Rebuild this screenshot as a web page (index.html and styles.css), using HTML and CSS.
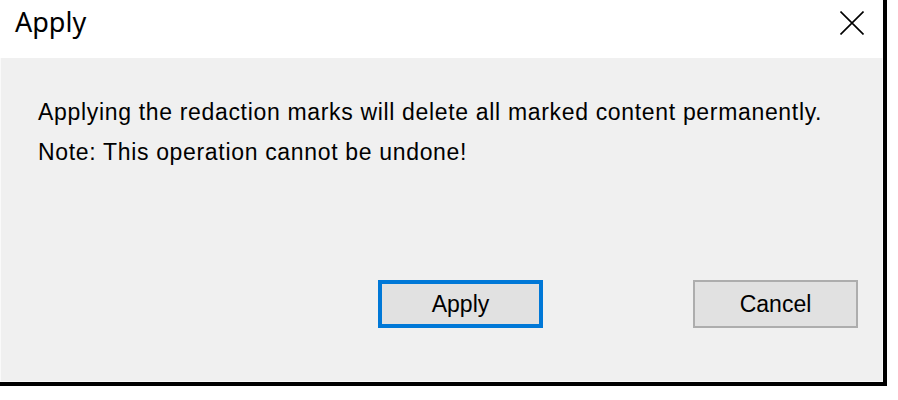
FILE: index.html
```html
<!DOCTYPE html>
<html lang="en">
<head>
  <meta charset="UTF-8">
  <title>Apply</title>
  <link rel="stylesheet" href="styles.css">
</head>
<body>
  <div class="dialog">
    <div class="titlebar">
      <div class="title">Apply</div>
      <button class="close" aria-label="Close">
        <svg width="24" height="24" viewBox="0 0 24 24">
          <path d="M0.5 0.5 L23.5 23.5 M23.5 0.5 L0.5 23.5" stroke="#000" stroke-width="1.6" fill="none"/>
        </svg>
      </button>
    </div>

    <div class="content">
      <div class="message">
        <p>Applying the redaction marks will delete all marked content permanently.</p>
        <p>Note: This operation cannot be undone!</p>
      </div>
      <div class="buttons">
        <button class="btn default">Apply</button>
        <button class="btn">Cancel</button>
      </div>
    </div>
  </div>
</body>
</html>
```

FILE: styles.css
```css
:root {
  --face: #f0f0f0;
  --btn: #e1e1e1;
  --btn-border: #adadad;
  --focus: #0078d7;
}

body {
  margin: 0;
  background: #fff;
  font-family: "Liberation Sans", Arial, sans-serif;
  color: #000;
}

.dialog {
  width: 883px;
  height: 382px;
  border-right: 4px solid #000;
  border-bottom: 4px solid #000;
  display: flex;
  flex-direction: column;
}

.titlebar {
  height: 58px;
  background: #fff;
  display: flex;
  align-items: flex-start;
  justify-content: space-between;
  padding: 8px 19px 0 15px;
  box-sizing: border-box;
}

.title {
  font-family: "Noto Sans", "Liberation Sans", sans-serif;
  font-size: 27px;
  line-height: 27px;
}

.close {
  border: none;
  background: none;
  padding: 0;
  margin-top: 3px;
  width: 24px;
  height: 24px;
  display: block;
}

.close svg { display: block; }

.content {
  flex: 1;
  background: var(--face);
  display: flex;
  flex-direction: column;
  padding: 34px 25px 54px 38px;
  box-shadow: inset 1px 0 #fafafa, inset -1px -1px #fafafa;
}

.message p {
  margin: 0;
  font-size: 23px;
  line-height: 40px;
  letter-spacing: 0.67px;
}

.buttons {
  margin-top: auto;
  display: flex;
  justify-content: flex-end;
  gap: 150px;
}

.btn {
  width: 165px;
  height: 48px;
  box-sizing: border-box;
  background: var(--btn);
  border: 2px solid var(--btn-border);
  font-family: "Liberation Sans", Arial, sans-serif;
  font-size: 23px;
  color: #000;
  padding: 0;
}

.btn.default {
  border: 4px solid var(--focus);
}
```
